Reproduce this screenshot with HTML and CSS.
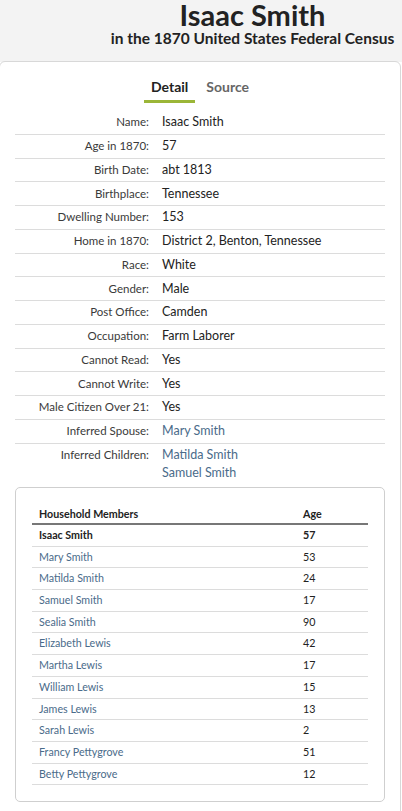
FILE: index.html
```html
<!DOCTYPE html>
<html lang="en">
<head>
<meta charset="utf-8">
<title>Isaac Smith in the 1870 United States Federal Census</title>
<link rel="stylesheet" href="styles.css">
</head>
<body>
<header class="page-header">
  <h1 class="title">Isaac Smith</h1>
  <p class="subtitle">in the 1870 United States Federal Census</p>
</header>
<main class="card">
  <nav class="tabs">
    <span class="tab active">Detail</span>
    <span class="tab">Source</span>
  </nav>
  <dl class="details">
    <div class="row"><dt>Name:</dt><dd>Isaac Smith</dd></div>
    <div class="row"><dt>Age in 1870:</dt><dd>57</dd></div>
    <div class="row"><dt>Birth Date:</dt><dd>abt 1813</dd></div>
    <div class="row"><dt>Birthplace:</dt><dd>Tennessee</dd></div>
    <div class="row"><dt>Dwelling Number:</dt><dd>153</dd></div>
    <div class="row"><dt>Home in 1870:</dt><dd>District 2, Benton, Tennessee</dd></div>
    <div class="row"><dt>Race:</dt><dd>White</dd></div>
    <div class="row"><dt>Gender:</dt><dd>Male</dd></div>
    <div class="row"><dt>Post Office:</dt><dd>Camden</dd></div>
    <div class="row"><dt>Occupation:</dt><dd>Farm Laborer</dd></div>
    <div class="row"><dt>Cannot Read:</dt><dd>Yes</dd></div>
    <div class="row"><dt>Cannot Write:</dt><dd>Yes</dd></div>
    <div class="row"><dt>Male Citizen Over 21:</dt><dd>Yes</dd></div>
    <div class="row"><dt>Inferred Spouse:</dt><dd><a class="link">Mary Smith</a></dd></div>
    <div class="row last"><dt>Inferred Children:</dt><dd><a class="link">Matilda Smith</a><a class="link">Samuel Smith</a></dd></div>
  </dl>
  <section class="household">
    <table class="members">
      <thead>
        <tr><th>Household Members</th><th class="age">Age</th></tr>
      </thead>
      <tbody>
        <tr class="self"><td>Isaac Smith</td><td class="age">57</td></tr>
        <tr><td><a class="link">Mary Smith</a></td><td class="age">53</td></tr>
        <tr><td><a class="link">Matilda Smith</a></td><td class="age">24</td></tr>
        <tr><td><a class="link">Samuel Smith</a></td><td class="age">17</td></tr>
        <tr><td><a class="link">Sealia Smith</a></td><td class="age">90</td></tr>
        <tr><td><a class="link">Elizabeth Lewis</a></td><td class="age">42</td></tr>
        <tr><td><a class="link">Martha Lewis</a></td><td class="age">17</td></tr>
        <tr><td><a class="link">William Lewis</a></td><td class="age">15</td></tr>
        <tr><td><a class="link">James Lewis</a></td><td class="age">13</td></tr>
        <tr><td><a class="link">Sarah Lewis</a></td><td class="age">2</td></tr>
        <tr><td><a class="link">Francy Pettygrove</a></td><td class="age">51</td></tr>
        <tr><td><a class="link">Betty Pettygrove</a></td><td class="age">12</td></tr>
      </tbody>
    </table>
  </section>
</main>
</body>
</html>
```

FILE: styles.css
```css
* { box-sizing: border-box; }
html, body { margin: 0; padding: 0; }
body {
  background: #ffffff;
  font-family: Lato, "Liberation Sans", sans-serif;
  color: #222;
  overflow: hidden;
}
.page-header {
  background: #f3f3f3;
  height: 62px;
  padding: 0 0 0 103px;
  text-align: center;
}
.title {
  margin: 0;
  font-size: 29px;
  line-height: 30px;
  font-weight: 700;
  color: #222;
}
.subtitle {
  margin: 0;
  font-size: 15.5px;
  line-height: 16px;
  font-weight: 700;
  color: #222;
}
.card {
  margin: -1px 0 0 -1px;
  width: 402px;
  border: 1px solid #d8d8d8;
  border-radius: 6px;
  background: #fff;
  padding: 0 15px 20px;
}
.tabs {
  display: flex;
  justify-content: center;
  gap: 4px;
  padding-top: 14px;
}
.tab {
  font-size: 14px;
  font-weight: 700;
  line-height: 22px;
  padding: 0 7px 2px;
  color: #666;
  border-bottom: 3px solid transparent;
}
.tab.active {
  color: #222;
  border-bottom-color: #9bb638;
}
.details {
  margin: 8px 0 0;
}
.row {
  display: grid;
  grid-template-columns: 134px 1fr;
  column-gap: 13px;
  padding: 2.4px 0 2.37px;
  border-bottom: 1px solid #dcdcdc;
}
.row.last { border-bottom: none; }
.row dt {
  text-align: right;
  font-size: 11.5px;
  line-height: 18px;
  color: #3a3a3a;
}
.row dd {
  margin: 0;
  font-size: 12.5px;
  line-height: 18px;
  color: #222;
  display: flex;
  flex-direction: column;
}
.link { color: #4a6b8a; text-decoration: none; }
.household {
  margin-top: 3px;
  border: 1px solid #cfcfcf;
  border-radius: 5px;
  padding: 16px 16px 16px;
}
.members {
  width: 100%;
  border-collapse: collapse;
  font-size: 10.7px;
}
.members th {
  text-align: left;
  font-weight: 700;
  line-height: 14.7px;
  padding: 3px 7px 1px;
  border-bottom: 2px solid #777;
  color: #222;
}
.members td {
  line-height: 14.7px;
  padding: 3px 7px;
  border-bottom: 1px solid #dcdcdc;
  color: #222;
}
.members .age { width: 72px; }
.members .self td { font-weight: 700; }
```
